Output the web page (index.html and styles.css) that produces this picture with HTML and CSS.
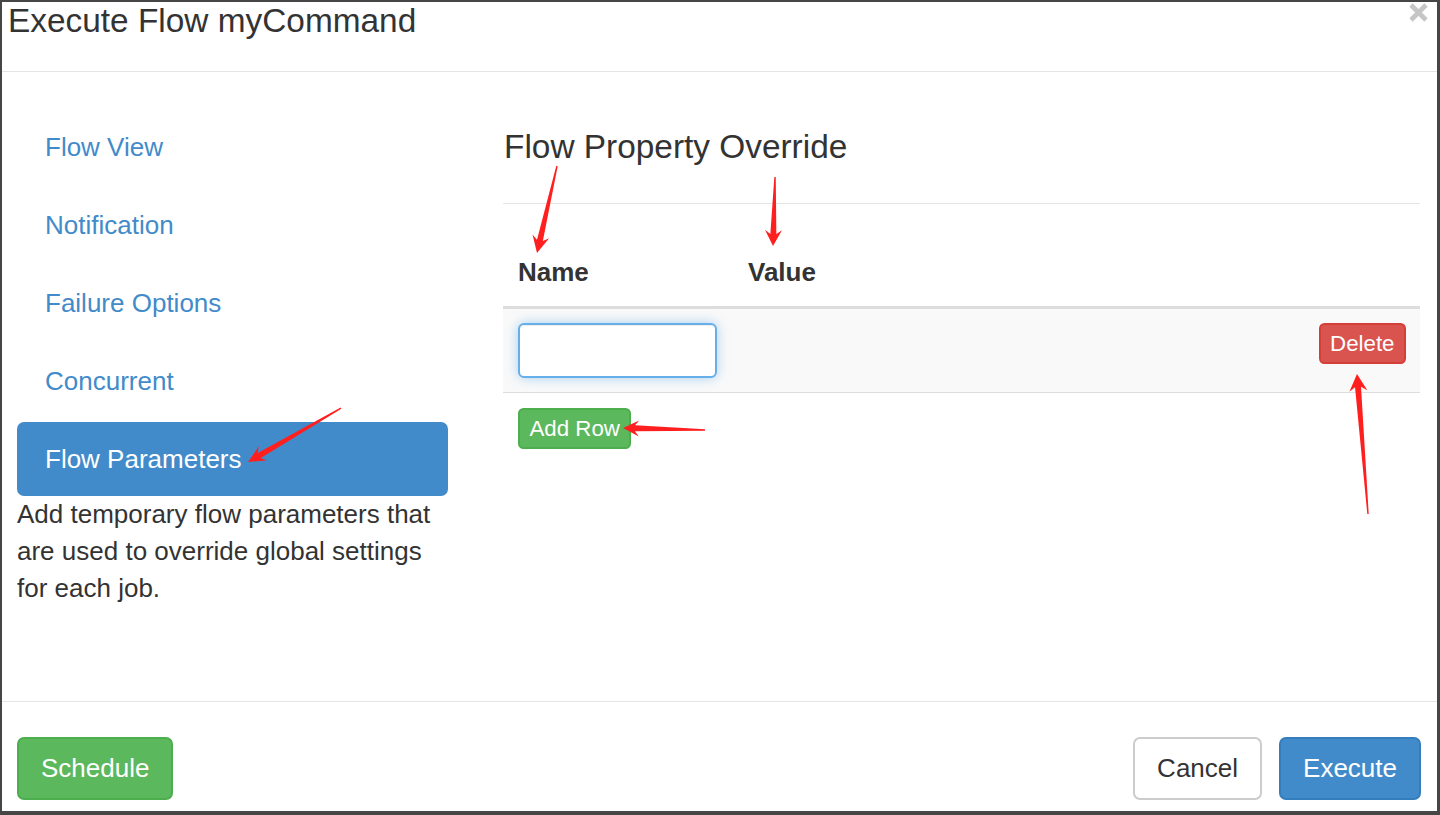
FILE: index.html
```html
<!DOCTYPE html>
<html lang="en">
<head>
<meta charset="utf-8">
<title>Execute Flow myCommand</title>
<link rel="stylesheet" href="styles.css">
</head>
<body>
<div class="modal">
  <div class="modal-header">
    <h4 class="modal-title">Execute Flow myCommand</h4>
    <button class="close" type="button" aria-label="Close">
      <svg width="19" height="19" viewBox="0 0 19 19"><path d="M2 2 L17 17 M17 2 L2 17" stroke="#c6c6c6" stroke-width="4.6" fill="none"/></svg>
    </button>
  </div>
  <div class="modal-body">
    <div class="side">
      <ul class="nav">
        <li><a href="#">Flow View</a></li>
        <li><a href="#">Notification</a></li>
        <li><a href="#">Failure Options</a></li>
        <li><a href="#">Concurrent</a></li>
        <li class="active"><a href="#">Flow Parameters</a></li>
      </ul>
      <p class="help">Add temporary flow parameters that are used to override global settings for each job.</p>
    </div>
    <div class="main">
      <h4 class="section-title">Flow Property Override</h4>
      <table class="props">
        <thead>
          <tr><th class="col-name">Name</th><th>Value</th><th></th></tr>
        </thead>
        <tbody>
          <tr>
            <td><input class="field" type="text"></td>
            <td></td>
            <td class="actions"><button class="btn btn-xs btn-danger" type="button">Delete</button></td>
          </tr>
        </tbody>
      </table>
      <div class="add-row"><button class="btn btn-xs btn-success" type="button">Add Row</button></div>
    </div>
  </div>
  <div class="modal-footer">
    <button class="btn btn-success" type="button">Schedule</button>
    <div class="footer-right">
      <button class="btn btn-default" type="button">Cancel</button>
      <button class="btn btn-primary" type="button">Execute</button>
    </div>
  </div>
</div>
<svg class="annotations" width="1440" height="815" viewBox="0 0 1440 815">
  <g fill="#ff1f1f">
    <polygon transform="translate(537 253) rotate(-77.05)" points="0,0 17,-8.5 13,-3 89.3,-0.7 89.3,0.7 13,3 17,8.5"/>
    <polygon transform="translate(773 246) rotate(-88.3)" points="0,0 16,-8.5 12,-3 69,-0.7 69,0.7 12,3 16,8.5"/>
    <polygon transform="translate(248 462) rotate(-30.1)" points="0,0 17,-8 13,-3 107.5,-0.7 107.5,0.7 13,3 17,8"/>
    <polygon transform="translate(623 428) rotate(1.4)" points="0,0 16,-8 12,-3 82,-0.7 82,0.7 12,3 16,8"/>
    <polygon transform="translate(1357 374) rotate(85.5)" points="0,0 17,-9 13,-3 140.4,-0.7 140.4,0.7 13,3 17,9"/>
  </g>
</svg>
</body>
</html>
```
FILE: styles.css
```css
* { box-sizing: border-box; }

body {
  margin: 0;
  width: 1440px;
  height: 815px;
  overflow: hidden;
  background: #464646;
  font-family: "Liberation Sans", Arial, sans-serif;
  color: #333;
  position: relative;
}

.modal {
  margin: 2px 0 0 2px;
  width: 1435px;
  height: 809px;
  background: #fff;
  display: flex;
  flex-direction: column;
}

.modal-header {
  flex-shrink: 0;
  height: 70px;
  border-bottom: 1px solid #e5e5e5;
  display: flex;
  justify-content: space-between;
  align-items: flex-start;
  padding: 0 9px 0 6px;
  overflow: hidden;
}

.modal-title {
  margin: -5.4px 0 0;
  font-size: 33.4px;
  line-height: 47.7px;
  font-weight: normal;
  color: #333;
}

.close {
  margin: 1px 0 0;
  padding: 0;
  border: 0;
  background: none;
  display: block;
  width: 19px;
  height: 19px;
}

.close svg { display: block; }

.modal-body {
  flex: 1;
  display: flex;
  gap: 55px;
  padding: 38px 17px 0 15px;
}

.side {
  width: 431px;
  flex-shrink: 0;
}

.nav {
  list-style: none;
  margin: 0;
  padding: 0;
}

.nav li + li { margin-top: 4px; }

.nav a {
  display: block;
  padding: 18.5px 28px;
  font-size: 26px;
  line-height: 37px;
  color: #428bca;
  text-decoration: none;
  border-radius: 7px;
}

.nav .active a {
  background: #428bca;
  color: #fff;
}

.help {
  margin: 0;
  font-size: 26px;
  line-height: 37px;
}

.main { flex: 1; min-width: 0; }

.section-title {
  margin: 12.6px 0 32.7px 1px;
  font-size: 33.4px;
  line-height: 47.7px;
  font-weight: normal;
}

.props {
  width: 100%;
  border-collapse: separate;
  border-spacing: 0;
}

.props th {
  text-align: left;
  vertical-align: bottom;
  font-size: 26px;
  line-height: 37px;
  font-weight: bold;
  padding: 50.5px 15px 14.5px;
  border-top: 1px solid #e5e5e5;
  border-bottom: 3px solid #ddd;
}

.props th.col-name { width: 230px; }

.props td {
  padding: 14px 15px;
  background: #f9f9f9;
  border-bottom: 1px solid #ddd;
  vertical-align: top;
}

.props td.actions {
  text-align: right;
  padding-right: 14px;
}

.field {
  display: block;
  width: 199px;
  height: 55px;
  border: 2px solid #66afe9;
  border-radius: 6px;
  background: #fff;
  outline: none;
  box-shadow: inset 0 1px 1px rgba(0,0,0,.075), 0 0 12px rgba(102,175,233,.55);
}

.add-row { padding: 15px 0 0 15px; }

.btn {
  display: inline-block;
  font-family: inherit;
  font-size: 26px;
  line-height: 37px;
  padding: 11px 22px;
  border: 2px solid transparent;
  border-radius: 7px;
  cursor: pointer;
  white-space: nowrap;
}

.btn-xs {
  font-size: 22.3px;
  line-height: 33.4px;
  padding: 2px 9.5px;
  border-radius: 5.5px;
}

.btn-success { background: #5cb85c; border-color: #4cae4c; color: #fff; }
.btn-danger { background: #d9534f; border-color: #d43f3a; color: #fff; }
.btn-primary { background: #428bca; border-color: #357ebd; color: #fff; }
.btn-default { background: #fff; border-color: #ccc; color: #333; }

.modal-footer {
  flex-shrink: 0;
  height: 110px;
  border-top: 1px solid #e5e5e5;
  padding: 35px 16px 0 15px;
  display: flex;
  justify-content: space-between;
  align-items: flex-start;
}

.footer-right {
  display: flex;
  gap: 17px;
}

.annotations {
  position: absolute;
  left: 0;
  top: 0;
  pointer-events: none;
}
```
